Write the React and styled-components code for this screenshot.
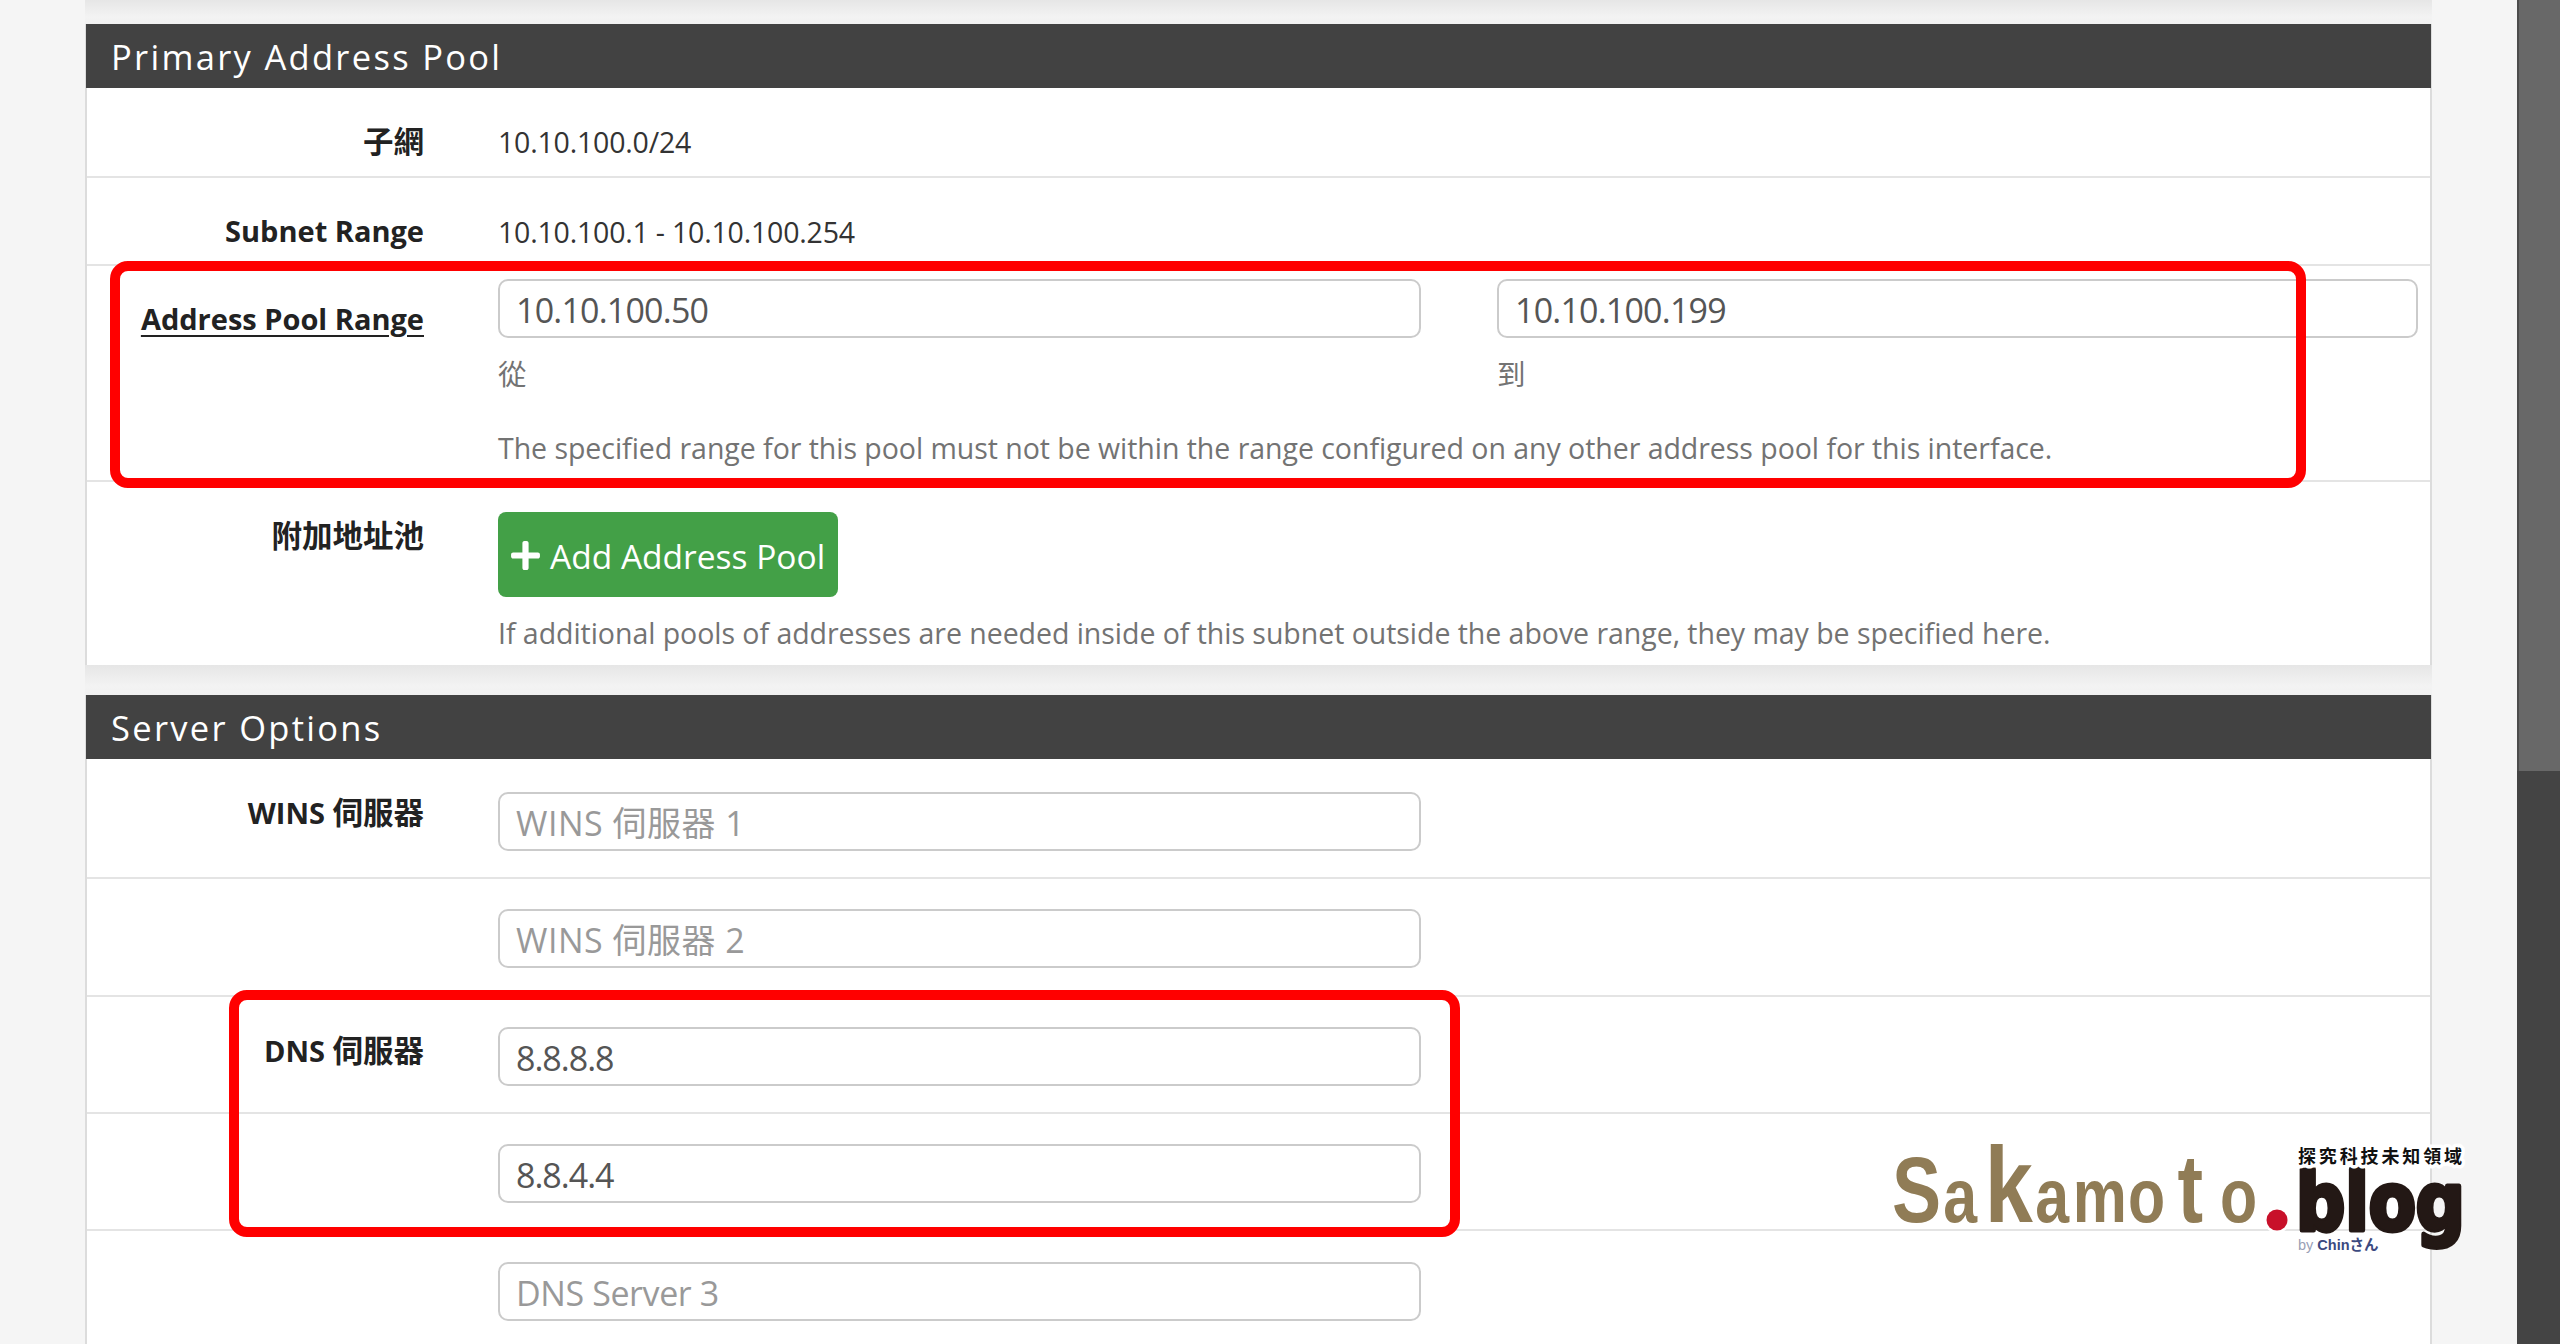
import React from 'react';
import styled, { createGlobalStyle } from 'styled-components';
import { FaPlus } from 'react-icons/fa';

const GlobalStyle = createGlobalStyle`
  html, body {
    margin: 0;
    height: 1344px;
    overflow: hidden;
    background: #f5f5f5;
    font-family: "Open Sans", "Noto Sans CJK TC", sans-serif;
  }
`;

const Page = styled.div`
  position: relative;
  display: flex;
  width: 2560px;
  height: 1344px;
  overflow: hidden;
`;

const Main = styled.main`
  flex: 1;
  padding: 0 85px;
`;

const Scrollbar = styled.div`
  width: 43px;
  height: 100%;
  background: #444;
`;

const ScrollThumb = styled.div`
  height: 771px;
  background: #686868;
  border-left: 2px solid #4c4c4c;
`;

const Gap = styled.div`
  height: ${({ $height }) => $height}px;
  background: linear-gradient(#e6e6e6, #f3f3f3 70%, #f1f1f1);
`;

const Panel = styled.section`
  background: #fff;
  border-left: 2px solid #dcdcdc;
  border-right: 2px solid #dcdcdc;
`;

const PanelHeading = styled.h2`
  margin: 0 -1px;
  height: 64px;
  padding-left: 25px;
  box-sizing: border-box;
  background: #424242;
  color: #fff;
  font-size: 34.5px;
  font-weight: 500;
  line-height: 66px;
  letter-spacing: 2.3px;
`;

const Row = styled.div`
  display: grid;
  grid-template-columns: 337px 1fr;
  column-gap: 74px;
  box-sizing: border-box;
  height: ${({ $height }) => $height}px;
  border-bottom: ${({ $last }) => ($last ? 'none' : '2px solid #e4e4e4')};
`;

const Label = styled.div`
  padding-top: 33px;
  text-align: right;
  color: #222;
  font-size: 29px;
  font-weight: 700;
  line-height: 40px;
  text-decoration: ${({ $underline }) => ($underline ? 'underline' : 'none')};
  text-underline-offset: 5px;
`;

const Cjk = styled.span`
  font-size: 30.5px;
`;

const Value = styled.div`
  padding-top: 34px;
  color: #333;
  font-size: 28.5px;
  line-height: 40px;
  letter-spacing: -0.2px;
`;

const Field = styled.div`
  padding-top: ${({ $top }) => $top}px;
  padding-right: 12px;
`;

const FieldPair = styled.div`
  display: grid;
  grid-template-columns: 923px 921px;
  column-gap: 76px;
`;

const Input = styled.input`
  display: block;
  box-sizing: border-box;
  width: ${({ $wide }) => ($wide ? '100%' : '923px')};
  height: 59px;
  padding: 2px 16px 0;
  border: 2px solid #cbcbcb;
  border-radius: 10px;
  background: #fff;
  color: #555;
  font-family: inherit;
  font-size: 34px;
  letter-spacing: ${({ $spacing }) => $spacing}px;
  outline: none;

  &::placeholder {
    color: #999;
    opacity: 1;
  }
`;

const Hint = styled.div`
  margin-top: ${({ $top }) => $top}px;
  color: #737373;
  font-size: 28.5px;
  line-height: 40px;
  letter-spacing: -0.04px;
`;

const AddButton = styled.button`
  display: flex;
  align-items: center;
  gap: 8px;
  box-sizing: border-box;
  width: 340px;
  height: 85px;
  padding: 2px 0 0 11px;
  border: none;
  border-radius: 8px;
  background: #43a047;
  color: #fff;
  font-family: inherit;
  font-size: 33.5px;
  white-space: nowrap;

  svg {
    width: 33px;
    height: 33px;
  }
`;

const Highlight = styled.div`
  position: absolute;
  left: ${({ $x }) => $x}px;
  top: ${({ $y }) => $y}px;
  width: ${({ $w }) => $w}px;
  height: ${({ $h }) => $h}px;
  box-sizing: border-box;
  border: 10px solid #ff0000;
  border-radius: 18px;
`;

const LogoSvg = styled.svg`
  position: absolute;
  left: 1880px;
  top: 1130px;
  width: 610px;
  height: 130px;

  text {
    paint-order: stroke;
    stroke: #fff;
    stroke-width: 7px;
    stroke-linejoin: round;
  }
`;

const Logo = () => (
  <LogoSvg viewBox="0 0 610 130">
    <text transform="scale(0.8 1)" x="15 79 131 194 241 310 372 425" y="92" fill="#907c56" fontFamily='"Liberation Sans", sans-serif' fontWeight="700" fontSize="76">
      <tspan fontSize="92">S</tspan>a<tspan fontSize="108">k</tspan>amo<tspan fontSize="96">t</tspan>o
    </text>
    <circle cx="397" cy="90" r="13" fill="#fff" />
    <circle cx="397" cy="90" r="10.5" fill="#c8102a" />
    <text x="416" y="100" textLength="169" lengthAdjust="spacingAndGlyphs" fill="#231815" fontFamily='"DejaVu Sans", sans-serif' fontWeight="700" fontSize="80" style={{ strokeWidth: 5, stroke: '#231815' }}>
      blog
    </text>
    <text x="418" y="33" textLength="164" fill="#111" fontFamily='"Noto Sans CJK TC", sans-serif' fontWeight="700" fontSize="18">
      探究科技未知領域
    </text>
    <text x="418" y="120" fontFamily='"Liberation Sans", sans-serif' fontWeight="700" fontSize="14.5" fill="#3c4a80" style={{ strokeWidth: 0 }}>
      <tspan fill="#9aa0b5" fontWeight="400">by </tspan>Chin<tspan fontFamily='"Noto Sans CJK JP", sans-serif'>さん</tspan>
    </text>
  </LogoSvg>
);

const App = () => (
  <Page>
    <GlobalStyle />
    <Main>
      <Gap $height={24} />
      <Panel>
        <PanelHeading>Primary Address Pool</PanelHeading>
        <Row $height={90}>
          <Label><Cjk>子網</Cjk></Label>
          <Value>10.10.100.0/24</Value>
        </Row>
        <Row $height={88}>
          <Label>Subnet Range</Label>
          <Value>10.10.100.1 - 10.10.100.254</Value>
        </Row>
        <Row $height={216}>
          <Label $underline>Address Pool Range</Label>
          <Field $top={13}>
            <FieldPair>
              <div>
                <Input $spacing={-0.8} defaultValue="10.10.100.50" />
                <Hint $top={16}>從</Hint>
              </div>
              <div>
                <Input $wide $spacing={-0.8} defaultValue="10.10.100.199" />
                <Hint $top={16}>到</Hint>
              </div>
            </FieldPair>
            <Hint $top={34}>The specified range for this pool must not be within the range configured on any other address pool for this interface.</Hint>
          </Field>
        </Row>
        <Row $height={183} $last>
          <Label><Cjk>附加地址池</Cjk></Label>
          <Field $top={30}>
            <AddButton><FaPlus />Add Address Pool</AddButton>
            <Hint $top={16}>If additional pools of addresses are needed inside of this subnet outside the above range, they may be specified here.</Hint>
          </Field>
        </Row>
      </Panel>
      <Gap $height={30} />
      <Panel>
        <PanelHeading>Server Options</PanelHeading>
        <Row $height={120}>
          <Label>WINS <Cjk>伺服器</Cjk></Label>
          <Field $top={33}><Input $spacing={0.5} placeholder="WINS 伺服器 1" /></Field>
        </Row>
        <Row $height={118}>
          <div />
          <Field $top={30}><Input $spacing={0.5} placeholder="WINS 伺服器 2" /></Field>
        </Row>
        <Row $height={117}>
          <Label>DNS <Cjk>伺服器</Cjk></Label>
          <Field $top={30}><Input $spacing={-1} defaultValue="8.8.8.8" /></Field>
        </Row>
        <Row $height={117}>
          <div />
          <Field $top={30}><Input $spacing={-1} defaultValue="8.8.4.4" /></Field>
        </Row>
        <Row $height={114} $last>
          <div />
          <Field $top={31}><Input $spacing={-0.4} placeholder="DNS Server 3" /></Field>
        </Row>
      </Panel>
    </Main>
    <Scrollbar><ScrollThumb /></Scrollbar>
    <Highlight $x={110} $y={261} $w={2196} $h={227} />
    <Highlight $x={229} $y={990} $w={1231} $h={247} />
    <Logo />
  </Page>
);

export default App;
